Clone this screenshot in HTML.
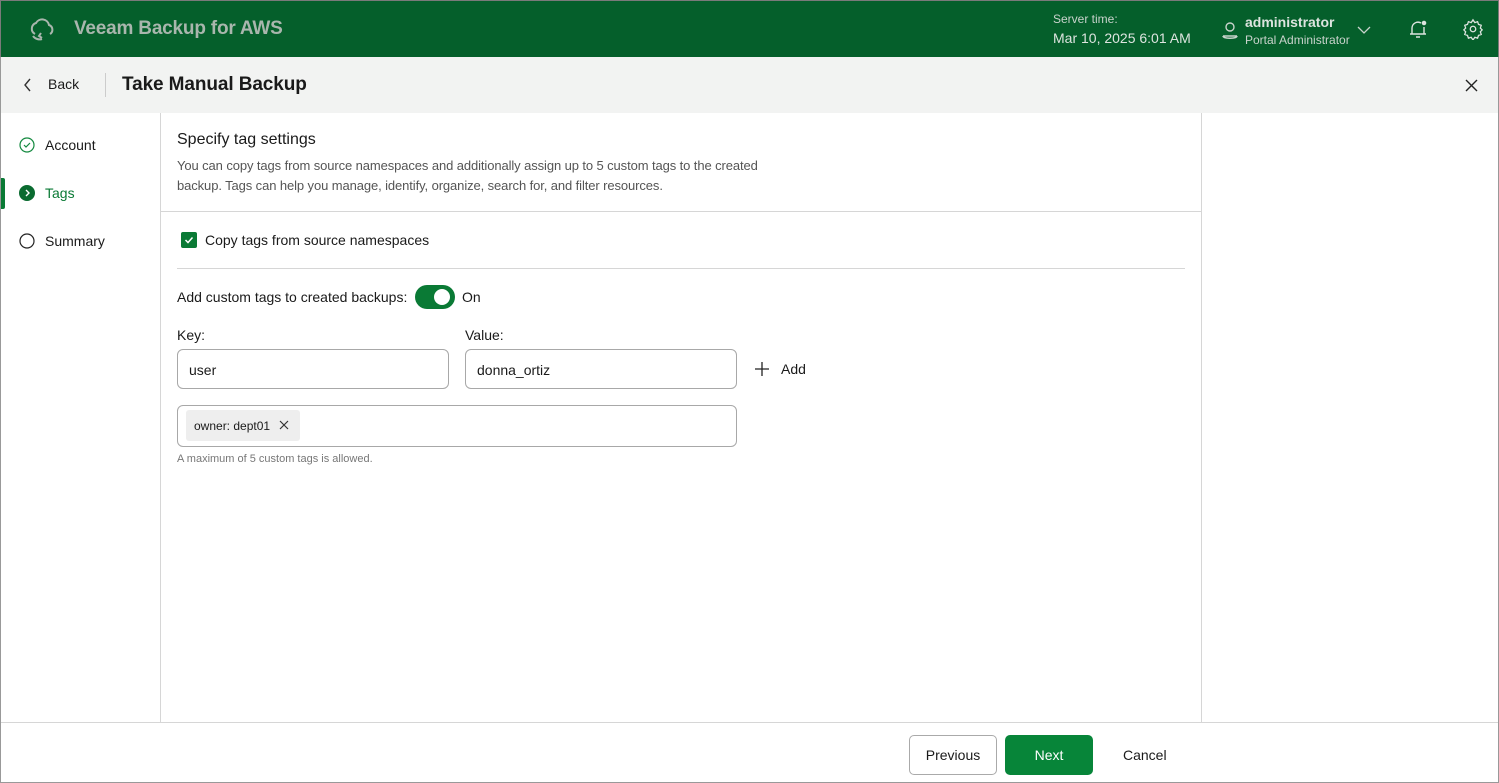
<!DOCTYPE html>
<html><head><meta charset="utf-8"><style>
*{box-sizing:border-box;margin:0;padding:0}
body{width:1499px;height:783px;overflow:hidden;font-family:"Liberation Sans",sans-serif;background:#fff;position:relative;color:#1a1a1a}
.a{position:absolute}
.hdr{left:0;top:0;width:1499px;height:57px;background:#055f2b;border:1px solid #7a7a7a;border-bottom:none}
.bar{left:0;top:57px;width:1499px;height:56px;background:#f2f3f2;border-left:1px solid #999;border-right:1px solid #999}
.frame{left:0;top:113px;width:1499px;height:670px;border:1px solid #999;border-top:none}
.t{white-space:nowrap}
</style></head><body>
<div class="a hdr">
<svg class="a" style="left:28px;top:15px" width="28" height="28" viewBox="0 0 28 28" fill="none" stroke="#a9b6ad" stroke-width="2"><path d="M6 18a6 6 0 0 1 1-11a7 7 0 0 1 13 2a5 5 0 0 1 1 9"/><path d="M4 20c2 3 6 4 9 3M12 17l-2 3 3 2"/></svg>
<div class="a t" style="left:73px;top:17px;font-size:19px;font-weight:bold;color:#a9b6ad;letter-spacing:-0.2px">Veeam Backup for AWS</div>
<div class="a t" style="left:1052px;top:11px;font-size:12px;color:#c9d3cc">Server time:</div>
<div class="a t" style="left:1052px;top:29px;font-size:14px;color:#dde4df">Mar 10, 2025 6:01 AM</div>
<svg class="a" style="left:1219px;top:19px" width="20" height="22" viewBox="0 0 20 22" fill="none" stroke="#c9d3cc" stroke-width="1.4"><circle cx="10" cy="7" r="4"/><path d="M3 16h14M3 16c0 3 14 3 14 0"/></svg>
<div class="a t" style="left:1244px;top:13px;font-size:14px;font-weight:bold;color:#dde4df">administrator</div>
<div class="a t" style="left:1244px;top:32px;font-size:12px;color:#c9d3cc">Portal Administrator</div>
<svg class="a" style="left:1356px;top:24px" width="14" height="10" viewBox="0 0 14 10" fill="none" stroke="#c9d3cc" stroke-width="1.3"><path d="M1 2l6 6 6-6"/></svg>
<svg class="a" style="left:1406px;top:17px" width="22" height="22" viewBox="0 0 22 22" fill="none" stroke="#dde4df" stroke-width="1.4"><path d="M5 16V10a6 6 0 0 1 9-5M17 9v7M3 16h16M9 19h4"/><circle cx="17" cy="5" r="1.6" fill="#dde4df"/></svg>
<svg class="a" style="left:1461px;top:17px" width="22" height="22" viewBox="0 0 24 24" fill="none" stroke="#dde4df" stroke-width="1.4"><circle cx="12" cy="12" r="3"/><path d="M12 2l2 3 3-1 1 3 3 1-1 3 2 2-2 2 1 3-3 1-1 3-3-1-2 3-2-3-3 1-1-3-3-1 1-3-2-2 2-2-1-3 3-1 1-3 3 1z"/></svg>
</div>
<div class="a bar">
<svg class="a" style="left:22px;top:21px" width="10" height="14" viewBox="0 0 10 14" fill="none" stroke="#333" stroke-width="1.4"><path d="M7 1L2 7l5 6"/></svg>
<div class="a t" style="left:47px;top:19px;font-size:14px">Back</div>
<div class="a" style="left:104px;top:16px;width:1px;height:24px;background:#ccc"></div>
<div class="a t" style="left:121px;top:17px;font-size:19px;font-weight:bold;color:#1a1a1a;letter-spacing:-0.1px">Take Manual Backup</div>
<svg class="a" style="left:1464px;top:22px" width="13" height="13" viewBox="0 0 13 13" stroke="#222" stroke-width="1.4"><path d="M1 1l11 11M12 1L1 12"/></svg>
</div>
<div class="a frame"></div>
<div class="a" style="left:160px;top:113px;width:1px;height:609px;background:#d6d6d6"></div>
<div class="a" style="left:1201px;top:113px;width:1px;height:609px;background:#d6d6d6"></div>
<div class="a" style="left:1px;top:722px;width:1497px;height:1px;background:#d6d6d6"></div>
<svg class="a" style="left:19px;top:137px" width="16" height="16" viewBox="0 0 16 16" fill="none" stroke="#13893f" stroke-width="1.2"><circle cx="8" cy="8" r="7"/><path d="M5 8l2 2 4-4"/></svg>
<div class="a t" style="left:45px;top:137px;font-size:14px">Account</div>
<div class="a" style="left:1px;top:178px;width:4px;height:31px;background:#0a7a35;border-radius:0 2px 2px 0"></div>
<svg class="a" style="left:19px;top:185px" width="16" height="16" viewBox="0 0 16 16"><circle cx="8" cy="8" r="8" fill="#0a6b30"/><path d="M7 5l3 3-3 3" fill="none" stroke="#fff" stroke-width="1.4"/></svg>
<div class="a t" style="left:45px;top:185px;font-size:14px;color:#0a7a35">Tags</div>
<svg class="a" style="left:19px;top:233px" width="16" height="16" viewBox="0 0 16 16" fill="none" stroke="#222" stroke-width="1.2"><circle cx="8" cy="8" r="7"/></svg>
<div class="a t" style="left:45px;top:233px;font-size:14px">Summary</div>
<div class="a t" style="left:177px;top:131px;font-size:16px">Specify tag settings</div>
<div class="a" style="left:177px;top:156px;font-size:13px;line-height:20px;color:#555;width:625px;letter-spacing:-0.1px">You can copy tags from source namespaces and additionally assign up to 5 custom tags to the created backup. Tags can help you manage, identify, organize, search for, and filter resources.</div>
<div class="a" style="left:161px;top:211px;width:1040px;height:1px;background:#d6d6d6"></div>
<div class="a" style="left:181px;top:232px;width:16px;height:16px;background:#0a7a35;border-radius:2px"></div>
<svg class="a" style="left:181px;top:232px" width="16" height="16" viewBox="0 0 16 16" fill="none" stroke="#fff" stroke-width="1.5"><path d="M4.5 8l2.5 2.5 4.5-5"/></svg>
<div class="a t" style="left:205px;top:232px;font-size:14px">Copy tags from source namespaces</div>
<div class="a" style="left:177px;top:268px;width:1008px;height:1px;background:#d6d6d6"></div>
<div class="a t" style="left:177px;top:289px;font-size:14px">Add custom tags to created backups:</div>
<div class="a" style="left:415px;top:285px;width:40px;height:24px;background:#0a7a35;border-radius:12px"></div>
<div class="a" style="left:434px;top:289px;width:16px;height:16px;background:#fff;border-radius:50%"></div>
<div class="a t" style="left:462px;top:289px;font-size:14px">On</div>
<div class="a t" style="left:177px;top:327px;font-size:14px">Key:</div>
<div class="a t" style="left:465px;top:327px;font-size:14px">Value:</div>
<div class="a" style="left:177px;top:349px;width:272px;height:40px;border:1px solid #a8a8a8;border-radius:6px"></div>
<div class="a t" style="left:189px;top:362px;font-size:14px">user</div>
<div class="a" style="left:465px;top:349px;width:272px;height:40px;border:1px solid #a8a8a8;border-radius:6px"></div>
<div class="a t" style="left:477px;top:362px;font-size:14px">donna_ortiz</div>
<svg class="a" style="left:754px;top:361px" width="16" height="16" viewBox="0 0 16 16" stroke="#222" stroke-width="1.3"><path d="M8 1v14M1 8h14"/></svg>
<div class="a t" style="left:781px;top:361px;font-size:14px">Add</div>
<div class="a" style="left:177px;top:405px;width:560px;height:42px;border:1px solid #a8a8a8;border-radius:6px"></div>
<div class="a" style="left:186px;top:410px;width:114px;height:31px;background:#eeeeee;border-radius:3px"></div>
<div class="a t" style="left:194px;top:419px;font-size:12px">owner: dept01</div>
<svg class="a" style="left:279px;top:420px" width="10" height="10" viewBox="0 0 10 10" stroke="#333" stroke-width="1.2"><path d="M1 1l8 8M9 1L1 9"/></svg>
<div class="a t" style="left:177px;top:453px;font-size:11px;color:#777">A maximum of 5 custom tags is allowed.</div>
<div class="a" style="left:909px;top:735px;width:88px;height:40px;border:1px solid #aaa;border-radius:5px;text-align:center;line-height:38px;font-size:14px">Previous</div>
<div class="a" style="left:1005px;top:735px;width:88px;height:40px;background:#078539;border-radius:5px;text-align:center;line-height:40px;font-size:14px;color:#fff">Next</div>
<div class="a t" style="left:1123px;top:747px;font-size:14px">Cancel</div>
</body></html>
